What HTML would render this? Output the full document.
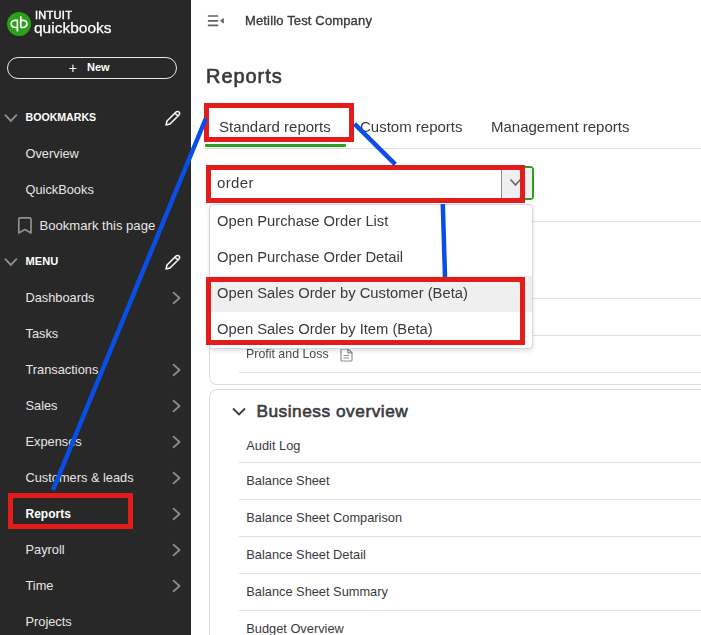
<!DOCTYPE html>
<html><head><meta charset="utf-8">
<style>
*{box-sizing:border-box;margin:0;padding:0}
html,body{width:701px;height:635px;overflow:hidden;background:#fff;font-family:"Liberation Sans",sans-serif}
.abs{position:absolute;white-space:nowrap}
#side{position:absolute;left:0;top:0;width:191px;height:635px;background:#282828}
.si{position:absolute;left:25.5px;font-size:12.8px;color:#e6e6e6;line-height:1}
.sh{position:absolute;left:25.5px;font-size:10.6px;font-weight:700;color:#fff;line-height:1}
.chev{position:absolute;left:172px;width:10px;height:14px}
.tab{position:absolute;font-size:15px;color:#393a3d;line-height:1;margin-top:0px}
.dd{position:absolute;left:216.5px;font-size:14.75px;color:#393a3d;line-height:1;margin-top:1.4px}
.li{position:absolute;left:246.3px;font-size:12.8px;color:#393a3d;line-height:1}
.hr{position:absolute;height:1px;background:#dedfe2}
.red{position:absolute;border:5px solid #e21b1b}
.g,.tab,.dd{will-change:transform}
</style></head><body>
<div id="side">
  <!-- logo -->
  <svg class="abs" style="left:0;top:0" width="40" height="45" viewBox="0 0 40 45">
    <circle cx="19.05" cy="24" r="12" fill="#2ca01c"/>
    <g fill="none" stroke="#fff" stroke-width="1.65">
    <path d="M17.4 20.3 H14.8 A3.6 3.6 0 0 0 14.8 27.5 H16.6 M17.4 19.5 V31.6"/>
    <path d="M20.8 16.3 V27.5 M21.6 20.3 H23.3 A3.6 3.6 0 0 1 23.3 27.5 H20.8"/>
    </g>
  </svg>
  <div class="abs g" style="left:34.5px;top:10px;font-size:11px;font-weight:400;color:#fff;letter-spacing:0.3px;line-height:1;-webkit-text-stroke:0.45px #fff">INTUIT</div>
  <div class="abs g" style="left:34px;top:20px;font-size:15.5px;color:#fff;line-height:1;letter-spacing:0px;-webkit-text-stroke:0.25px #fff">quickbooks</div>
  <!-- new button -->
  <div class="abs" style="left:7px;top:57px;width:170px;height:22px;border:1.5px solid #e8e8e8;border-radius:11px"></div>
  <div class="abs" style="left:68.7px;top:61.2px;font-size:14px;color:#fff;line-height:1">+</div>
  <div class="abs" style="left:87px;top:62px;font-size:11px;font-weight:700;color:#fff;line-height:1">New</div>

  <svg class="abs" style="left:4px;top:113px" width="14" height="10" viewBox="0 0 14 10"><path d="M1.3 2.1 L6.8 7.9 L12.4 2.1" fill="none" stroke="#8d9096" stroke-width="1.8" stroke-linecap="round"/></svg>
  <div class="sh" style="top:112.3px">BOOKMARKS</div>
  <svg class="abs" style="left:164px;top:110px" width="17" height="17" viewBox="0 0 17 17"><path d="M2 15 L3 11 L12 2 a1.6 1.6 0 0 1 3 3 L6 14 Z M11 3 L14 6" fill="none" stroke="#fff" stroke-width="1.5" stroke-linejoin="round"/></svg>
  <div class="si" style="top:148px">Overview</div>
  <div class="si" style="top:184px">QuickBooks</div>
  <svg class="abs" style="left:17px;top:216px" width="16" height="19" viewBox="0 0 16 19"><path d="M1.8 3.2 Q1.8 1.8 3.2 1.8 H12.6 Q14 1.8 14 3.2 V17 L7.9 13.6 L1.8 17 Z" fill="none" stroke="#8d9096" stroke-width="1.7" stroke-linejoin="round"/></svg>
  <div class="si" style="left:39.5px;top:219px;font-size:13.1px">Bookmark this page</div>
  <svg class="abs" style="left:4px;top:257px" width="14" height="10" viewBox="0 0 14 10"><path d="M1.3 2.1 L6.8 7.9 L12.4 2.1" fill="none" stroke="#8d9096" stroke-width="1.8" stroke-linecap="round"/></svg>
  <div class="sh" style="top:256px;font-size:11.1px">MENU</div>
  <svg class="abs" style="left:164px;top:254px" width="17" height="17" viewBox="0 0 17 17"><path d="M2 15 L3 11 L12 2 a1.6 1.6 0 0 1 3 3 L6 14 Z M11 3 L14 6" fill="none" stroke="#fff" stroke-width="1.5" stroke-linejoin="round"/></svg>
  <div class="si" style="top:292px">Dashboards</div>
  <div class="si" style="top:328px">Tasks</div>
  <div class="si" style="top:364px">Transactions</div>
  <div class="si" style="top:400px">Sales</div>
  <div class="si" style="top:436px">Expenses</div>
  <div class="si" style="top:472px">Customers &amp; leads</div>
  <div class="si" style="top:508px;font-weight:700;color:#fff;font-size:12px">Reports</div>
  <div class="si" style="top:544px">Payroll</div>
  <div class="si" style="top:580px">Time</div>
  <div class="si" style="top:616px">Projects</div>
  <svg class="abs" style="left:0;top:0" width="191" height="635">
    <g fill="none" stroke="#8d9096" stroke-width="1.7" stroke-linecap="round" stroke-linejoin="round">
      <path d="M173.5 292.6 L179.5 298.0 L173.5 303.4"/>
      <path d="M173.5 364.6 L179.5 370.0 L173.5 375.4"/>
      <path d="M173.5 400.6 L179.5 406.0 L173.5 411.4"/>
      <path d="M173.5 436.6 L179.5 442.0 L173.5 447.4"/>
      <path d="M173.5 472.6 L179.5 478.0 L173.5 483.4"/>
      <path d="M173.5 508.6 L179.5 514.0 L173.5 519.4"/>
      <path d="M173.5 544.6 L179.5 550.0 L173.5 555.4"/>
      <path d="M173.5 580.6 L179.5 586.0 L173.5 591.4"/>
    </g>
  </svg>
</div>

<!-- header -->
<svg class="abs" style="left:206px;top:13px" width="20" height="15" viewBox="0 0 20 15">
  <g stroke="#5f6066" stroke-width="1.7" stroke-linecap="round"><path d="M2.6 3 H11.5 M2.6 7.8 H11.5 M2.6 12.4 H11.5"/></g>
  <path d="M14.5 7.8 L17.4 5.5 V10.1 Z" fill="#5f6066" stroke="#5f6066" stroke-width="0.8" stroke-linejoin="round"/>
</svg>
<div class="abs g" style="left:244.5px;top:14px;font-size:13px;color:#393a3d;line-height:1;letter-spacing:0.15px;-webkit-text-stroke:0.35px #393a3d">Metillo Test Company</div>

<div class="abs g" style="left:205.5px;top:66px;font-size:20px;font-weight:400;color:#393a3d;line-height:1;letter-spacing:0.95px;-webkit-text-stroke:0.65px #393a3d">Reports</div>

<div class="tab" style="left:219px;top:119px">Standard reports</div>
<div class="tab" style="left:360px;top:119px">Custom reports</div>
<div class="tab" style="left:490.5px;top:119px">Management reports</div>
<div class="abs" style="left:205px;top:144px;width:141px;height:3px;background:#2ca01c;border-radius:1px"></div>
<div class="hr" style="left:205px;top:148px;width:496px"></div>

<!-- card 1 (behind dropdown) -->
<div class="abs" style="left:209px;top:221px;width:520px;height:164px;border:1px solid #dcdde0;border-top:none;border-radius:0 0 8px 8px"></div>
<div class="hr" style="left:532px;top:221px;width:169px"></div>
<div class="hr" style="left:239px;top:298px;width:462px"></div>
<div class="hr" style="left:239px;top:335px;width:462px"></div>
<div class="hr" style="left:239px;top:372px;width:462px"></div>
<div class="li g" style="top:348px;font-size:12.4px;color:#4a4b50">Profit and Loss</div>
<svg class="abs" style="left:339px;top:348px" width="15" height="14" viewBox="0 0 15 14"><path d="M2 2 Q2 1 3 1 H9 L13 4.5 V12 Q13 13 12 13 H3 Q2 13 2 12 Z M8.8 1.2 V4.8 H12.8 M4.5 7.5 H10 M4.5 10 H10" fill="none" stroke="#8d9096" stroke-width="1.2" stroke-linejoin="round"/></svg>

<!-- card 2 -->
<div class="abs" style="left:209px;top:389px;width:520px;height:260px;border:1px solid #dcdde0;border-radius:8px"></div>
<svg class="abs" style="left:231px;top:406px" width="16" height="11" viewBox="0 0 16 11"><path d="M2 2.5 L8 8.5 L14 2.5" fill="none" stroke="#393a3d" stroke-width="1.8"/></svg>
<div class="abs" style="left:256.4px;top:403px;font-size:17.3px;font-weight:400;color:#393a3d;line-height:1;letter-spacing:0.52px;-webkit-text-stroke:0.6px #393a3d">Business overview</div>
<div class="li" style="top:440px">Audit Log</div>
<div class="hr" style="left:239px;top:462px;width:462px"></div>
<div class="li" style="top:475px">Balance Sheet</div>
<div class="hr" style="left:239px;top:499px;width:462px"></div>
<div class="li" style="top:512px">Balance Sheet Comparison</div>
<div class="hr" style="left:239px;top:536px;width:462px"></div>
<div class="li" style="top:549px">Balance Sheet Detail</div>
<div class="hr" style="left:239px;top:573px;width:462px"></div>
<div class="li" style="top:586px">Balance Sheet Summary</div>
<div class="hr" style="left:239px;top:610px;width:462px"></div>
<div class="li" style="top:623px">Budget Overview</div>

<!-- search input -->
<div class="abs" style="left:208px;top:166px;width:326px;height:34px;border:2px solid #2ca01c;border-radius:4px;background:#fff"></div>
<div class="abs" style="left:501px;top:168px;width:31px;height:30px;background:#efefef;border-left:1px solid #8d9096"></div>
<svg class="abs" style="left:509px;top:178px" width="14" height="10" viewBox="0 0 14 10"><path d="M1.5 1.5 L6.5 7 L11.5 1.5" fill="none" stroke="#6b6c72" stroke-width="1.8"/></svg>
<div class="dd" style="top:174px;left:217px;font-size:15px;letter-spacing:0.35px">order</div>

<!-- dropdown -->
<div class="abs" style="left:209px;top:203.5px;width:323.5px;height:145.5px;background:#fff;border:1px solid #d4d7dc;border-radius:4px;box-shadow:0 2px 4px rgba(0,0,0,0.12)"></div>
<div class="abs" style="left:210px;top:275.5px;width:321.5px;height:36px;background:#efefef"></div>
<div class="dd" style="top:213px">Open Purchase Order List</div>
<div class="dd" style="top:249px">Open Purchase Order Detail</div>
<div class="dd" style="top:285px">Open Sales Order by Customer (Beta)</div>
<div class="dd" style="top:321px">Open Sales Order by Item (Beta)</div>

<!-- annotations -->
<div class="red" style="left:204px;top:103px;width:150px;height:39px"></div>
<div class="red" style="left:206px;top:165px;width:319px;height:38px"></div>
<div class="red" style="left:206px;top:277px;width:319px;height:68px"></div>
<div class="red" style="left:8px;top:493px;width:125px;height:36px;border-width:5.3px"></div>
<svg class="abs" style="left:0;top:0" width="701" height="635">
  <g stroke="#0a4ee8" stroke-width="4.5" fill="none">
    <path d="M205.8 118.5 L53 490"/>
    <path d="M354.5 123.8 L395.3 164.3"/>
    <path d="M442.8 204 L445 277"/>
  </g>
</svg>
</body></html>
